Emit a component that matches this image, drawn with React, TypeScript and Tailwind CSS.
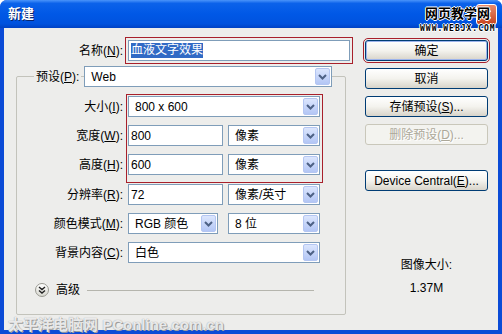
import React from "react";

function Chevron() {
  return (
    <svg width="9" height="6" viewBox="0 0 9 6">
      <path d="M1 1 L4.5 4.5 L8 1" stroke="#4D6185" strokeWidth="2" fill="none" />
    </svg>
  );
}

function Select({ className, text }: { className: string; text: React.ReactNode }) {
  return (
    <div className={`flex h-[21px] border border-[#7F9DB9] bg-white ${className}`}>
      <div className="flex-1 flex items-center pl-[6px] whitespace-nowrap overflow-hidden">{text}</div>
      <div className="m-[1px] w-[15px] flex items-center justify-center rounded-[2px] border border-[#B4C6F2] bg-linear-to-b from-[#DCE6FD] to-[#B3C6F5]">
        <Chevron />
      </div>
    </div>
  );
}

function Input({ className, text }: { className: string; text: string }) {
  return (
    <div className={`flex items-center h-[21px] border border-[#7F9DB9] bg-white pl-[2px] ${className}`}>{text}</div>
  );
}

function Btn({ className, children, disabled }: { className: string; children: React.ReactNode; disabled?: boolean }) {
  return (
    <div
      className={`h-[21px] flex items-center justify-center rounded-[3px] border whitespace-nowrap ${
        disabled
          ? "border-[#C9C7BA] text-[#ACA899] bg-[#F3F3EF] [text-shadow:1px_1px_0_#FFFFFF]"
          : "border-[#003C74] bg-linear-to-b from-white via-[#F4F3EE] to-[#D8D4CA]"
      } ${className}`}
    >
      {children}
    </div>
  );
}

export default function App() {
  return (
    <div className="relative w-[502px] h-[334px] overflow-hidden bg-white font-['Liberation_Sans','Noto_Sans_CJK_SC',sans-serif] text-[12px] leading-[14px] text-black">
      <div className="w-[502px] h-[334px] rounded-t-[7px] bg-[#0B4BD6] flex flex-col overflow-hidden">
        {/* Title bar */}
        <div className="h-[28px] flex items-center pl-[8px] bg-[linear-gradient(to_bottom,#4A94FA_0%,#0B62EA_12%,#0058E6_50%,#0052DE_85%,#0042C4_100%)]">
          <span className="text-white font-bold text-[13px] [text-shadow:1px_1px_0_#0A246A]">新建</span>
          <div className="ml-auto mr-[5px] w-[21px] h-[21px] rounded-[3px] border border-white bg-linear-to-b from-[#E98A6A] to-[#C7441E] flex items-center justify-center">
            <svg width="11" height="11" viewBox="0 0 11 11">
              <path d="M1.5 1.5 L9.5 9.5 M9.5 1.5 L1.5 9.5" stroke="white" strokeWidth="2" />
            </svg>
          </div>
        </div>

        {/* Body */}
        <div className="mx-[4px] h-[302px] bg-[#EDEDEB] flex">
          {/* Left column */}
          <div className="w-[357px] flex flex-col">
            <div className="mt-[12px] flex items-center h-[21px]">
              <div className="w-[119px] text-right">名称(<u>N</u>):</div>
              <div className="ml-[5px] w-[222px] h-[21px] border border-[#7F9DB9] bg-white flex items-center pl-[2px] outline outline-[#A8202B] outline-offset-2">
                <span className="bg-[#316AC5] text-white leading-[15px]">血液文字效果</span>
              </div>
            </div>

            {/* Group box */}
            <div className="ml-[12px] mt-[15px] w-[330px] h-[239px] border border-[#C3C3BB] rounded-[2px] flex flex-col">
              <div className="-mt-[11px] flex items-center h-[21px]">
                <div className="ml-[17px] px-[2px] bg-[#EDEDEB] whitespace-nowrap">预设(<u>P</u>):</div>
                <Select className="ml-[3px] w-[248px]" text="Web" />
              </div>

              <div className="relative mt-[9px] flex flex-col gap-[8px]">
                <div className="absolute left-[109px] top-[-2px] w-[197px] h-[89px] border border-[#A8202B] pointer-events-none" />
                <div className="flex items-center h-[21px]">
                  <div className="w-[106px] text-right">大小(<u>I</u>):</div>
                  <Select className="ml-[5px] w-[192px]" text="800 x 600" />
                </div>
                <div className="flex items-center h-[21px]">
                  <div className="w-[106px] text-right">宽度(<u>W</u>):</div>
                  <Input className="ml-[5px] w-[95px]" text="800" />
                  <Select className="ml-[5px] w-[92px]" text="像素" />
                </div>
                <div className="flex items-center h-[21px]">
                  <div className="w-[106px] text-right">高度(<u>H</u>):</div>
                  <Input className="ml-[5px] w-[95px]" text="600" />
                  <Select className="ml-[5px] w-[92px]" text="像素" />
                </div>
              </div>

              <div className="mt-[9px] flex flex-col gap-[8px]">
                <div className="flex items-center h-[21px]">
                  <div className="w-[106px] text-right">分辨率(<u>R</u>):</div>
                  <Input className="ml-[5px] w-[95px]" text="72" />
                  <Select className="ml-[5px] w-[92px]" text="像素/英寸" />
                </div>
                <div className="flex items-center h-[21px]">
                  <div className="w-[106px] text-right whitespace-nowrap">颜色模式(<u>M</u>):</div>
                  <Select className="ml-[5px] w-[90px]" text="RGB 颜色" />
                  <Select className="ml-[10px] w-[92px]" text="8 位" />
                </div>
                <div className="flex items-center h-[21px]">
                  <div className="w-[106px] text-right whitespace-nowrap">背景内容(<u>C</u>):</div>
                  <Select className="ml-[5px] w-[192px]" text="白色" />
                </div>
              </div>

              <div className="mt-[20px] flex items-center h-[14px]">
                <div className="ml-[18px] w-[14px] h-[14px] rounded-full border border-[#9A9A92] bg-linear-to-b from-white to-[#D8D8D0] flex items-center justify-center">
                  <svg width="8" height="8" viewBox="0 0 8 8">
                    <path d="M1 1 L4 3.5 L7 1 M1 4.5 L4 7 L7 4.5" stroke="#222" strokeWidth="1.4" fill="none" />
                  </svg>
                </div>
                <div className="ml-[7px]">高级</div>
                <div className="ml-[7px] mr-[31px] flex-1 h-[1px] bg-[#B5B5AD]" />
              </div>
            </div>
          </div>

          {/* Right column */}
          <div className="ml-[4px] w-[123px] flex flex-col">
            <Btn className="mt-[12px] outline outline-[#A8202B] outline-offset-1 shadow-[inset_0_0_0_1px_#9DB4EC]">确定</Btn>
            <Btn className="mt-[7px]">取消</Btn>
            <Btn className="mt-[7px]">存储预设(<u>S</u>)...</Btn>
            <Btn className="mt-[7px]" disabled>
              删除预设(<u>D</u>)...
            </Btn>
            <Btn className="mt-[25px]">Device Central(<u>E</u>)...</Btn>
            <div className="mt-[67px] text-center">图像大小:</div>
            <div className="mt-[9px] text-center">1.37M</div>
          </div>
        </div>
      </div>

      {/* Watermarks */}
      <div className="absolute left-[425px] top-[7px] text-[13px] leading-[14px] font-bold text-black [text-shadow:1px_0_0_#fff,-1px_0_0_#fff,0_1px_0_#fff,0_-1px_0_#fff]">
        网页教学网
      </div>
      <div className="absolute left-[420px] top-[24px] text-[8px] leading-[9px] font-bold tracking-[1px] text-black font-['DejaVu_Sans_Mono',monospace] [text-shadow:1px_0_0_#fff,-1px_0_0_#fff,0_1px_0_#fff,0_-1px_0_#fff]">
        WWW.WEBJX.COM
      </div>
      <div className="absolute left-[8px] top-[317px] text-[15px] leading-[16px] font-bold text-white/80 whitespace-nowrap [text-shadow:0_0_1px_#8A8A8A,1px_1px_0_#A0A0A0]">
        太平洋电脑网 PConline.com.cn
      </div>
    </div>
  );
}
